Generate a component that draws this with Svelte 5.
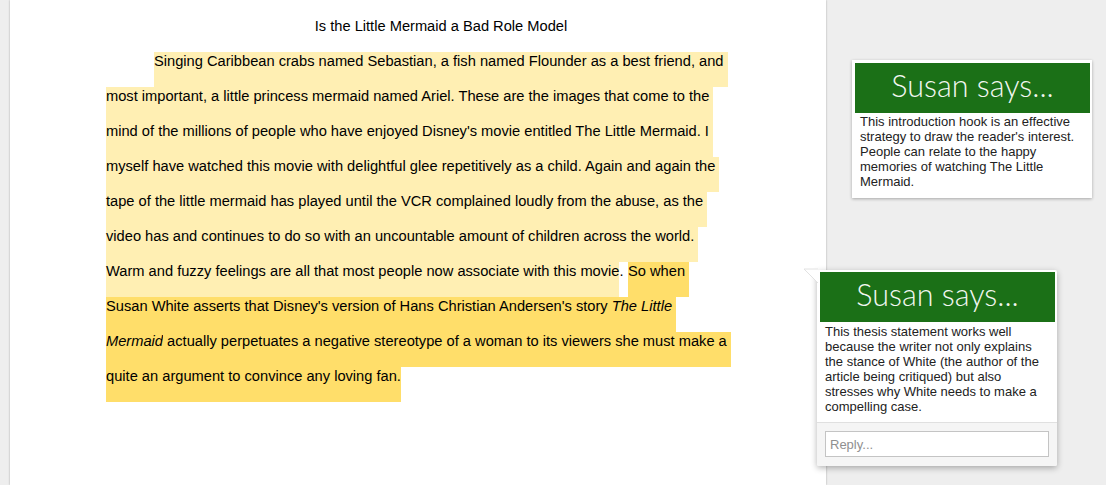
<script>
  const pale = '#ffefb3'
  const gold = '#ffde6a'

  const lines = [
    { indent: true, parts: [{ t: 'Singing Caribbean crabs named Sebastian, a fish named Flounder as a best friend, and ', c: pale }] },
    { parts: [{ t: 'most important, a little princess mermaid named Ariel. These are the images that come to the ', c: pale }] },
    { parts: [{ t: "mind of the millions of people who have enjoyed Disney's movie entitled The Little Mermaid. I ", c: pale }] },
    { parts: [{ t: 'myself have watched this movie with delightful glee repetitively as a child. Again and again the ', c: pale }] },
    { parts: [{ t: 'tape of the little mermaid has played until the VCR complained loudly from the abuse, as the ', c: pale }] },
    { parts: [{ t: 'video has and continues to do so with an uncountable amount of children across the world. ', c: pale }] },
    { parts: [{ t: 'Warm and fuzzy feelings are all that most people now associate with this movie.', c: pale, w: 513 }, { t: ' ', w: 9 }, { t: 'So when ', c: gold }] },
    { parts: [{ t: "Susan White asserts that Disney's version of Hans Christian Andersen's story ", c: gold }, { t: 'The Little ', c: gold, i: true }] },
    { parts: [{ t: 'Mermaid', c: gold, i: true }, { t: ' actually perpetuates a negative stereotype of a woman to its viewers she must make a ', c: gold }] },
    { parts: [{ t: 'quite an argument to convince any loving fan.', c: gold }] }
  ]
</script>

<div class="doc">
  <main class="page">
    <h1 class="title">Is the Little Mermaid a Bad Role Model</h1>
    {#each lines as line}
      <div class="line" class:indent={line.indent}>
        {#each line.parts as part}
          <span
            class="run"
            class:em={part.i}
            style:background={part.c}
            style:width={part.w ? `${part.w}px` : null}
          >{part.t}</span>
        {/each}
      </div>
    {/each}
  </main>

  <aside class="comments">
    <section class="card first">
      <div class="banner">Susan says...</div>
      <p class="body">This introduction hook is an effective strategy to draw the reader's interest. People can relate to the happy memories of watching The Little Mermaid.</p>
    </section>

    <section class="card active">
      <svg class="tail" width="16" height="16" viewBox="0 0 16 16">
        <path d="M15 15 L1 1 L15 1 Z" fill="#fff" />
        <path d="M15 15 L1 1 L15 1" fill="none" stroke="#e2e2e2" stroke-width="1" />
      </svg>
      <div class="banner">Susan says...</div>
      <p class="body">This thesis statement works well because the writer not only explains the stance of White (the author of the article being critiqued) but also stresses why White needs to make a compelling case.</p>
      <div class="reply">
        <input class="reply-input" placeholder="Reply..." />
      </div>
    </section>
  </aside>
</div>

<style>
  :global(body) {
    margin: 0;
    background: #eeeeee;
  }

  .doc {
    display: flex;
    height: 485px;
    overflow: hidden;
    padding-left: 10px;
    font-family: "Liberation Sans", Arial, sans-serif;
    box-sizing: border-box;
  }

  .page {
    width: 816px;
    flex: none;
    background: #fff;
    box-shadow: 0 0 2px rgba(0, 0, 0, 0.3);
    padding: 17px 50px 0 96px;
    box-sizing: border-box;
  }

  .title {
    margin: 0;
    padding-bottom: 17px;
    font-size: 14.67px;
    font-weight: 400;
    line-height: 18px;
    text-align: center;
    color: #000;
  }

  .line {
    height: 35px;
    line-height: 18px;
    font-size: 14.67px;
    color: #000;
    white-space: pre;
    display: flex;
  }

  .line.indent {
    padding-left: 48px;
  }

  .run {
    display: block;
    flex: none;
    height: 35px;
    box-sizing: border-box;
  }

  .em {
    font-style: italic;
  }

  .comments {
    flex: 1;
    display: flex;
    flex-direction: column;
    align-items: flex-start;
  }

  .card {
    position: relative;
    width: 240px;
    background: #fff;
    box-shadow: 0 1px 3px rgba(0, 0, 0, 0.3);
    box-sizing: border-box;
    color: #222;
  }

  .first {
    margin: 60px 0 0 26px;
    height: 138px;
    padding: 3px 2px 0 3px;
  }

  .active {
    margin: 72px 0 0 -9px;
    padding: 2px 0 0;
    border-radius: 2px;
    box-shadow: 0 2px 6px rgba(0, 0, 0, 0.3);
  }

  .tail {
    position: absolute;
    left: -14px;
    top: -2px;
  }

  .banner {
    height: 50px;
    background: #1b7017;
    color: #f2f7f1;
    font-family: Lato, sans-serif;
    font-weight: 300;
    font-size: 30.5px;
    line-height: 44px;
    text-align: center;
  }

  .active .banner {
    margin: 0 2px 0 3px;
  }

  .body {
    margin: 0;
    padding: 1px 10px 0 5px;
    font-size: 13px;
    line-height: 15px;
  }

  .active .body {
    padding: 2px 10px 8px 8px;
  }

  .reply {
    border-top: 1px solid #e0e0e0;
    background: #f5f5f5;
    padding: 8px 8px 9px 8px;
    border-radius: 0 0 2px 2px;
  }

  .reply-input {
    display: block;
    width: 224px;
    height: 26px;
    box-sizing: border-box;
    border: 1px solid #c4c4c4;
    background: #fff;
    padding: 0 4px;
    font-family: inherit;
    font-size: 13px;
    outline: none;
  }

  .reply-input::placeholder {
    color: #909090;
  }
</style>
